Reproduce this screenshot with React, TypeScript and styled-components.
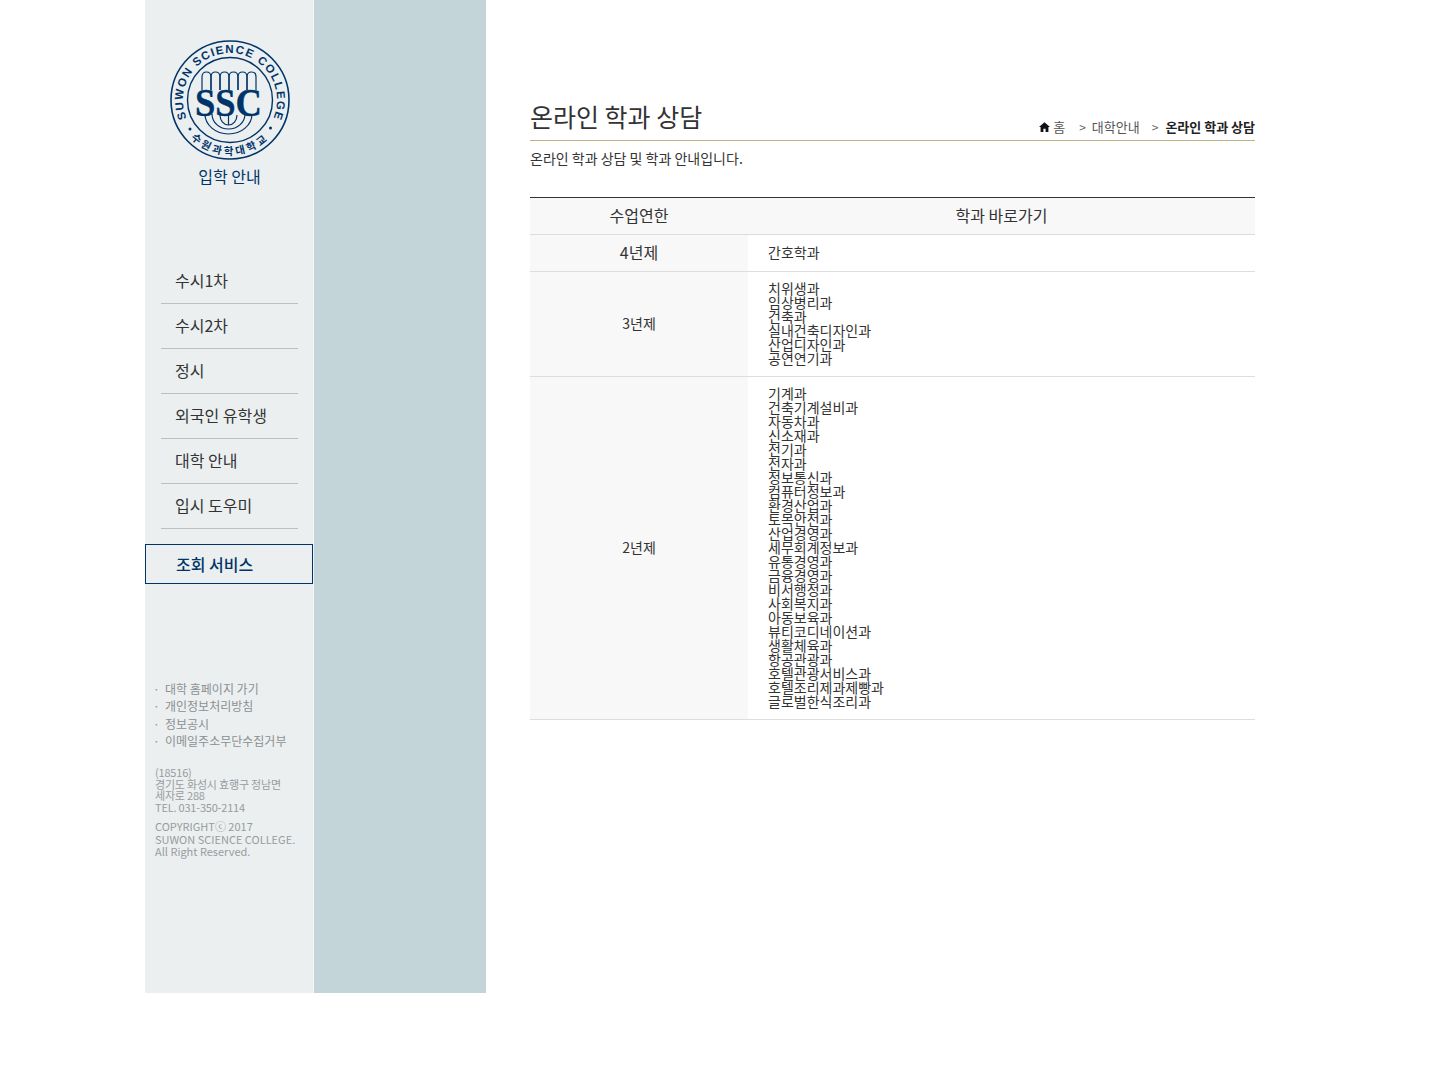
import React from "react";
import styled, { createGlobalStyle } from "styled-components";

const Global = createGlobalStyle`
  html, body { margin: 0; padding: 0; background: #fff; }
  body { font-family: "Noto Sans CJK KR", "Noto Sans", sans-serif; color: #333; }
  ul { list-style: none; margin: 0; padding: 0; }
`;
const Page = styled.div`
  display: flex;
  width: 1110px;
  margin-left: 145px;
  height: 993px;
`;
const Sidebar = styled.aside`
  width: 169px;
  box-sizing: border-box;
  border-right: 1px solid #f3f6f6;
  flex: none;
  background: #ebeff0;
  display: flex;
  flex-direction: column;
`;
const Band = styled.div`
  width: 172px;
  flex: none;
  background: #c4d5d9;
`;
const Main = styled.main`
  width: 725px;
  margin-left: 44px;
  flex: none;
`;
const LogoBox = styled.div`
  display: flex;
  flex-direction: column;
  align-items: center;
  padding-top: 40px;
  margin-right: -1px;
`;
const Tagline = styled.div`
  margin-top: 4px;
  font-size: 16px;
  line-height: 24px;
  color: #003468;
`;
const Nav = styled.ul`
  margin: 71px 15px 0 16px;
`;
const NavItem = styled.li`
  height: 44px;
  border-bottom: 1px solid #bcbfc0;
  padding-left: 14px;
  font-size: 16px;
  line-height: 42px;
  color: #333;
`;
const ActiveItem = styled.div`
  margin-top: 15px;
  width: 168px;
  height: 40px;
  box-sizing: border-box;
  border: 1px solid #003468;
  padding-left: 30px;
  font-size: 16px;
  line-height: 39px;
  font-weight: 500;
  color: #003468;
`;
const Links = styled.ul`
  margin: 96px 0 0 8px;
`;
const LinkItem = styled.li`
  display: flex;
  font-size: 12px;
  line-height: 17.3px;
  color: #8b8f91;
`;
const Dot = styled.span`
  width: 12px;
  flex: none;
`;
const Address = styled.div`
  margin: 18px 0 0 10px;
  font-size: 11px;
  line-height: 11.5px;
  color: #999c9e;
  letter-spacing: -0.2px;
  white-space: nowrap;
`;
const Copy = styled.div`
  margin: 7px 0 0 10px;
  font-size: 11px;
  line-height: 12.5px;
  color: #999c9e;
  white-space: nowrap;
`;
const TitleBar = styled.div`
  height: 141px;
  box-sizing: border-box;
  border-bottom: 1px solid #c2b280;
  display: flex;
  justify-content: space-between;
  align-items: flex-end;
`;
const Title = styled.h1`
  margin: 0;
  font-size: 25px;
  line-height: 36px;
  font-weight: 400;
  color: #333;
  position: relative;
  top: -6px;
`;
const Crumbs = styled.div`
  display: flex;
  align-items: center;
  font-size: 13px;
  line-height: 26px;
  color: #555;
`;
const Crumb = styled.span<{ $strong?: boolean }>`
  font-weight: ${(p) => (p.$strong ? 700 : 400)};
  color: ${(p) => (p.$strong ? "#222" : "#555")};
`;
const Sep = styled.span`
  margin: 0 7px 0 12px;
  color: #666;
  font-size: 12px;
`;
const FirstSep = styled(Sep)`
  margin: 0 6px 0 14px;
`;
const Lead = styled.p`
  margin: 7px 0 0;
  font-size: 14px;
  line-height: 20px;
  color: #333;
`;
const Table = styled.table`
  width: 725px;
  margin-top: 29px;
  border-collapse: collapse;
  border-top: 1px solid #333;
  table-layout: fixed;
`;
const Th = styled.th<{ $w?: number }>`
  width: ${(p) => (p.$w ? `${p.$w}px` : "auto")};
  height: 37px;
  box-sizing: border-box;
  padding: 0 0 2px;
  background: #f8f8f8;
  border-bottom: 1px solid #ddd;
  font-size: 16px;
  font-weight: 400;
  color: #333;
`;
const RowHead = styled.td<{ $big?: boolean }>`
  background: #f8f8f8;
  border-bottom: 1px solid #ddd;
  text-align: center;
  padding: 0 0 2px;
  font-size: ${(p) => (p.$big ? 16 : 14)}px;
  color: #333;
`;
const Cell = styled.td`
  height: 37px;
  box-sizing: border-box;
  border-bottom: 1px solid #ddd;
  padding: 9px 20px 11px;
  font-size: 14px;
  line-height: 14px;
  color: #333;
`;
const DeptLine = styled.div``;

const navy = "#003468";
const archXs = [32, 41, 50, 59, 68, 77];

const Logo = () => (
  <svg width="120" height="120" viewBox="0 0 120 120">
    <circle cx="60" cy="60" r="59" fill="none" stroke={navy} strokeWidth={1.6} />
    <circle cx="60" cy="60" r="42.5" fill="none" stroke={navy} strokeWidth={1.4} />
    <defs>
      <path id="logoTop" d="M 16.7 78.4 A 47 47 0 1 1 103.3 78.4" />
      <path id="logoBottom" d="M 13.3 89 A 55 55 0 0 0 106.7 89" />
    </defs>
    <text fontFamily="'Liberation Sans', sans-serif" fontSize="11.5" fontWeight="700" fill={navy} letterSpacing="1.35">
      <textPath href="#logoTop">SUWON SCIENCE COLLEGE</textPath>
    </text>
    <text fontFamily="'Noto Sans CJK KR', sans-serif" fontSize="10.5" fontWeight="700" fill={navy} letterSpacing="2.8">
      <textPath href="#logoBottom" startOffset="50%" textAnchor="middle">수원과학대학교</textPath>
    </text>
    <circle cx="20" cy="89" r="1.5" fill={navy} />
    <circle cx="100.5" cy="88" r="1.5" fill={navy} />
    <g fill="none" stroke={navy} strokeWidth="1.2">
      {archXs.map((x) => (
        <path key={x} d={`M${x} 50 V37 Q${x} 32 ${x + 4.5} 32 Q${x + 9} 32 ${x + 9} 37 V50`} />
      ))}
      <path d="M35 74 A 23.5 20 0 0 0 82 74" />
      <path d="M42 74 A 16.5 15 0 0 0 75 74" />
      <path d="M50 75 A 8.5 10 0 0 0 67 75" />
      <path d="M58.5 75 V 85" />
    </g>
    <text x="25" y="76" fontFamily="'Liberation Serif', serif" fontSize="40" fontWeight="700" fill={navy} stroke={navy} strokeWidth="0.4" textLength="67" lengthAdjust="spacingAndGlyphs">SSC</text>
  </svg>
);

const HomeIcon = () => (
  <svg width="11" height="10" viewBox="0 0 11 10" style={{ marginRight: 3 }}>
    <path d="M5.5 0.3 L11 5 H9.4 V10 H6.6 V6.8 H4.4 V10 H1.6 V5 H0 Z" fill="#111" />
  </svg>
);

const nav = ["수시1차", "수시2차", "정시", "외국인 유학생", "대학 안내", "입시 도우미"];
const links = ["대학 홈페이지 가기", "개인정보처리방침", "정보공시", "이메일주소무단수집거부"];
const three = ["치위생과", "임상병리과", "건축과", "실내건축디자인과", "산업디자인과", "공연연기과"];
const two = ["기계과", "건축기계설비과", "자동차과", "신소재과", "전기과", "전자과", "정보통신과", "컴퓨터정보과", "환경산업과", "토목안전과", "산업경영과", "세무회계정보과", "유통경영과", "금융경영과", "비서행정과", "사회복지과", "아동보육과", "뷰티코디네이션과", "생활체육과", "항공관광과", "호텔관광서비스과", "호텔조리제과제빵과", "글로벌한식조리과"];

export default function App() {
  return (
    <>
      <Global />
      <Page>
        <Sidebar>
          <LogoBox>
            <Logo />
            <Tagline>입학 안내</Tagline>
          </LogoBox>
          <Nav>
            {nav.map((n) => (
              <NavItem key={n}>{n}</NavItem>
            ))}
          </Nav>
          <ActiveItem>조회 서비스</ActiveItem>
          <Links>
            {links.map((l) => (
              <LinkItem key={l}>
                <Dot>·</Dot>
                {l}
              </LinkItem>
            ))}
          </Links>
          <Address>
            (18516)
            <br />
            경기도 화성시 효행구 정남면
            <br />
            세자로 288
            <br />
            TEL. 031-350-2114
          </Address>
          <Copy>
            COPYRIGHTⓒ 2017
            <br />
            SUWON SCIENCE COLLEGE.
            <br />
            All Right Reserved.
          </Copy>
        </Sidebar>
        <Band />
        <Main>
          <TitleBar>
            <Title>온라인 학과 상담</Title>
            <Crumbs>
              <HomeIcon />
              <Crumb>홈</Crumb>
              <FirstSep>&gt;</FirstSep>
              <Crumb>대학안내</Crumb>
              <Sep>&gt;</Sep>
              <Crumb $strong>온라인 학과 상담</Crumb>
            </Crumbs>
          </TitleBar>
          <Lead>온라인 학과 상담 및 학과 안내입니다.</Lead>
          <Table>
            <thead>
              <tr>
                <Th $w={218}>수업연한</Th>
                <Th>학과 바로가기</Th>
              </tr>
            </thead>
            <tbody>
              <tr>
                <RowHead $big>4년제</RowHead>
                <Cell>간호학과</Cell>
              </tr>
              <tr>
                <RowHead>3년제</RowHead>
                <Cell>
                  {three.map((d) => (
                    <DeptLine key={d}>{d}</DeptLine>
                  ))}
                </Cell>
              </tr>
              <tr>
                <RowHead>2년제</RowHead>
                <Cell>
                  {two.map((d) => (
                    <DeptLine key={d}>{d}</DeptLine>
                  ))}
                </Cell>
              </tr>
            </tbody>
          </Table>
        </Main>
      </Page>
    </>
  );
}
